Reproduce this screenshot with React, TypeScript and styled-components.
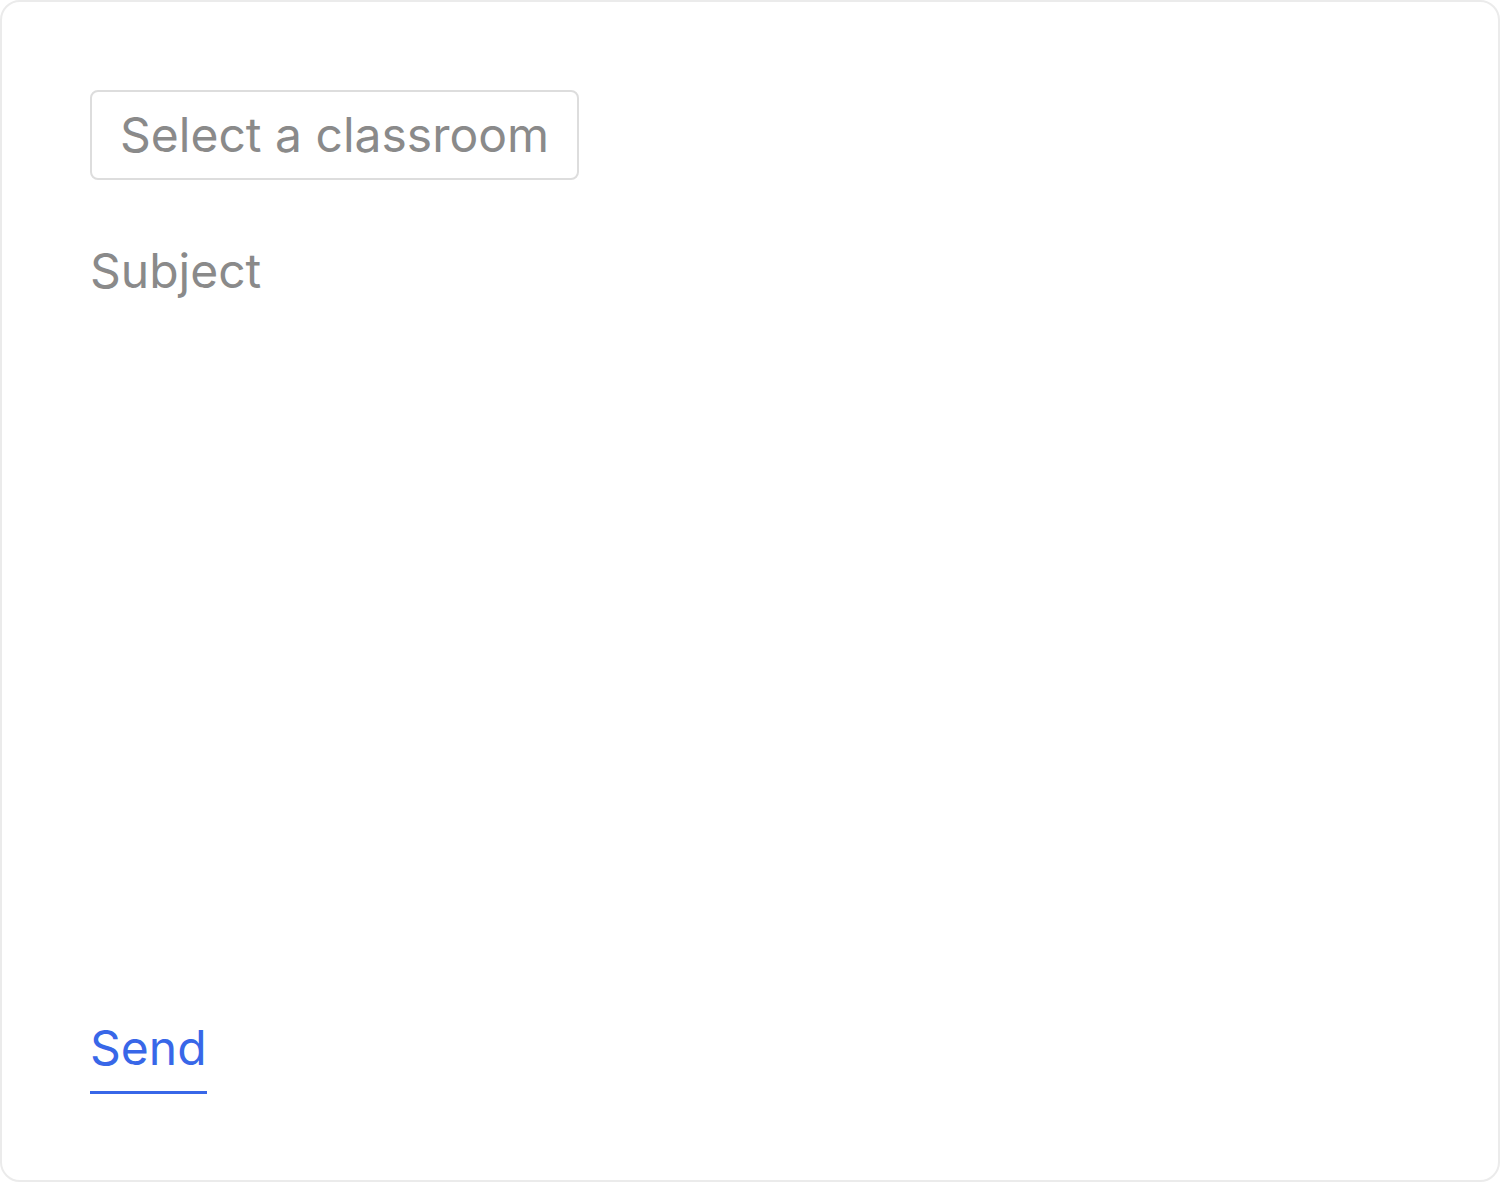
import React from "react";
import styled, { createGlobalStyle } from "styled-components";

const GlobalStyle = createGlobalStyle`
  html, body {
    margin: 0;
    padding: 0;
    background: #ffffff;
  }
  * {
    box-sizing: border-box;
  }
`;

const Card = styled.form`
  font-family: Inter, "Noto Sans", sans-serif;
  width: 1500px;
  height: 1182px;
  border: 2px solid #ebebeb;
  border-radius: 20px;
  background: #ffffff;
  padding: 88px 88px 86px;
  display: flex;
  flex-direction: column;
  align-items: flex-start;
`;

const ClassroomSelect = styled.button`
  font-family: inherit;
  font-size: 48px;
  line-height: 58px;
  color: #8a8a8a;
  background: #ffffff;
  border: 2px solid #dddddd;
  border-radius: 8px;
  padding: 14px 28px;
  cursor: pointer;
`;

const SubjectInput = styled.textarea`
  font-family: inherit;
  font-size: 48px;
  line-height: 58px;
  color: #333333;
  border: none;
  outline: none;
  resize: none;
  padding: 0;
  margin-top: 62px;
  width: 100%;
  flex: 1;
  background: transparent;

  &::placeholder {
    color: #8a8a8a;
  }
`;

const SendButton = styled.button`
  font-family: inherit;
  font-size: 48px;
  line-height: 58px;
  color: #3867e8;
  background: none;
  border: none;
  border-bottom: 3px solid #3867e8;
  padding: 0 0 14px;
  cursor: pointer;
`;

const App: React.FC = () => {
  return (
    <>
      <GlobalStyle />
      <Card onSubmit={(e) => e.preventDefault()}>
        <ClassroomSelect type="button">Select a classroom</ClassroomSelect>
        <SubjectInput placeholder="Subject" />
        <SendButton type="submit">Send</SendButton>
      </Card>
    </>
  );
};

export default App;
